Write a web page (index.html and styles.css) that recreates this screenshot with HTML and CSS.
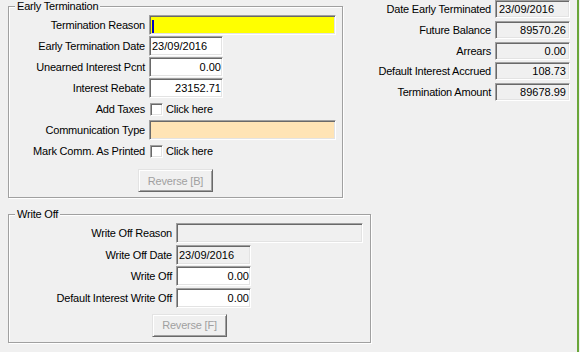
FILE: index.html
```html
<!DOCTYPE html>
<html lang="en">
<head>
    <meta charset="UTF-8">
    <title>Early Termination</title>
    <link rel="stylesheet" href="styles.css">
</head>
<body>
    <div class="screen">
        <div class="leftColumn">
            <fieldset class="group earlyTermination">
                <legend>Early Termination</legend>
                <div class="formGrid">
                    <label>Termination Reason</label>
                    <div class="field wide mandatory"><span class="caret"></span></div>

                    <label>Early Termination Date</label>
                    <div class="field">23/09/2016</div>

                    <label>Unearned Interest Pcnt</label>
                    <div class="field numeric">0.00</div>

                    <label>Interest Rebate</label>
                    <div class="field numeric">23152.71</div>

                    <label>Add Taxes</label>
                    <div class="checkCell"><span class="checkbox"></span><span>Click here</span></div>

                    <label>Communication Type</label>
                    <div class="field wide lookup"></div>

                    <label>Mark Comm. As Printed</label>
                    <div class="checkCell"><span class="checkbox"></span><span>Click here</span></div>
                </div>
                <button class="reverseButton" type="button" disabled>Reverse [B]</button>
            </fieldset>

            <fieldset class="group writeOff">
                <legend>Write Off</legend>
                <div class="formGrid">
                    <label>Write Off Reason</label>
                    <div class="field wide readonly"></div>

                    <label>Write Off Date</label>
                    <div class="field readonly">23/09/2016</div>

                    <label>Write Off</label>
                    <div class="field numeric">0.00</div>

                    <label>Default Interest Write Off</label>
                    <div class="field numeric">0.00</div>
                </div>
                <button class="reverseButton" type="button" disabled>Reverse [F]</button>
            </fieldset>
        </div>

        <div class="summary">
            <label>Date Early Terminated</label>
            <div class="field readonly">23/09/2016</div>

            <label>Future Balance</label>
            <div class="field readonly numeric">89570.26</div>

            <label>Arrears</label>
            <div class="field readonly numeric">0.00</div>

            <label>Default Interest Accrued</label>
            <div class="field readonly numeric">108.73</div>

            <label>Termination Amount</label>
            <div class="field readonly numeric">89678.99</div>
        </div>
    </div>
</body>
</html>
```

FILE: styles.css
```css
body {
    margin: 0;
    background-color: #f0f0f0;
    font-family: 'Liberation Sans', Arial, sans-serif;
    font-size: 11px;
    color: #000;
}

.screen {
    display: flex;
    box-sizing: border-box;
    width: 579px;
    height: 352px;
    border-right: 2px solid #6aa63a;
}

.leftColumn {
    display: flex;
    flex-direction: column;
    align-items: flex-start;
    padding-left: 8px;
}

/* etched group box */
.group {
    margin: 0;
    padding: 3px 0 5px;
    min-width: 0;
    box-sizing: border-box;
    border: 1px solid #a0a0a0;
    box-shadow: inset 1px 1px #fff, 1px 1px #fff;
}

.group legend {
    margin-left: 6px;
    padding: 0 2px;
    line-height: 12px;
    letter-spacing: -0.2px;
    background: #f0f0f0;
}

.earlyTermination {
    width: 335px;
}

.writeOff {
    width: 363px;
    margin-top: 10px;
}

.formGrid {
    display: grid;
    grid-template-columns: 136px auto;
    grid-auto-rows: 20px;
    column-gap: 4px;
    row-gap: 1px;
    align-items: center;
    justify-items: start;
}

.writeOff .formGrid {
    grid-template-columns: 163px auto;
    row-gap: 1.5px;
}

label {
    justify-self: end;
    white-space: nowrap;
    letter-spacing: -0.2px;
}

/* sunken text box */
.field {
    box-sizing: border-box;
    width: 74px;
    height: 20px;
    padding: 0 1px 0 2px;
    border: 1px solid;
    border-color: #a0a0a0 #fff #fff #a0a0a0;
    box-shadow: inset 1px 1px #696969, inset -1px -1px #e3e3e3;
    background: #fff;
    line-height: 18px;
    white-space: nowrap;
}

.field.wide {
    width: 187px;
}

.writeOff .field {
    width: 75px;
}

.writeOff .field.wide {
    width: 187px;
}

.numeric {
    text-align: right;
}

.readonly {
    background: #f0f0f0;
}

.mandatory {
    background: #ffff00;
}

.lookup {
    background: #ffe4b5;
}

.caret {
    display: inline-block;
    width: 2px;
    height: 13px;
    vertical-align: middle;
    background: #0000c0;
}

.checkCell {
    display: flex;
    align-items: center;
    gap: 3px;
    margin-left: 1px;
    letter-spacing: -0.2px;
}

.checkbox {
    box-sizing: border-box;
    width: 13px;
    height: 13px;
    background: #fff;
    border: 1px solid;
    border-color: #a0a0a0 #fff #fff #a0a0a0;
    box-shadow: inset 1px 1px #696969, inset -1px -1px #e3e3e3;
}

.reverseButton {
    display: block;
    box-sizing: border-box;
    width: 75px;
    height: 23px;
    margin: 8px auto 0;
    padding: 0;
    font: inherit;
    letter-spacing: -0.2px;
    color: #a0a0a0;
    background: #f0f0f0;
    border: 1px solid;
    border-color: #e3e3e3 #696969 #696969 #e3e3e3;
    box-shadow: inset 1px 1px #fff, inset -1px -1px #a0a0a0;
}

.writeOff .reverseButton {
    margin-top: 6px;
}

.summary {
    display: grid;
    grid-template-columns: auto 75px;
    grid-auto-rows: 18px;
    column-gap: 4px;
    row-gap: 2.75px;
    align-items: center;
    align-content: start;
    margin-left: auto;
    margin-right: 7px;
}

.summary .field {
    width: 75px;
    height: 18px;
    padding: 0 3px;
    line-height: 16px;
}
```
